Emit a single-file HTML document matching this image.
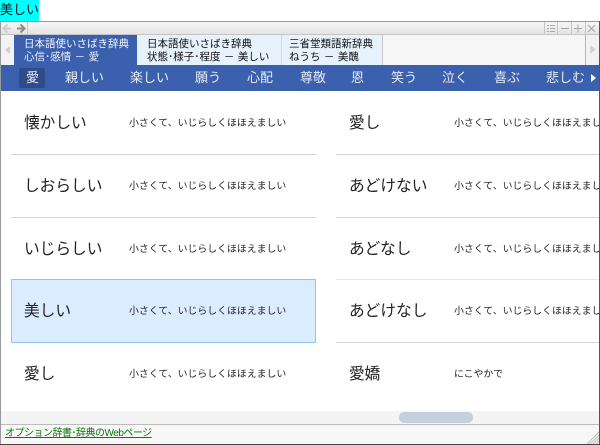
<!DOCTYPE html>
<html lang="ja"><head><meta charset="utf-8">
<style>
html,body{margin:0;padding:0;background:#fff}
body{width:600px;height:445px;position:relative;overflow:hidden;font-family:"Liberation Sans","Noto Sans CJK JP",sans-serif;color:#111}
.a{position:absolute;white-space:nowrap}
.t{line-height:14px;font-size:10.5px;word-spacing:.5px}
.n{top:69px;line-height:18px;font-size:13px;color:#e6ecf7}
.h{left:24px;font-size:15.7px;line-height:20px;color:#222}
.d{font-size:9.9px;line-height:14px;color:#222}
.l{height:1px;background:#d3d3e0}
</style></head><body>
<div class="a" style="left:0;top:0;width:39px;height:21px;background:#0ff"></div>
<div class="a" style="left:0;top:1px;font-size:13px;line-height:18px;color:#111">美しい</div>

<!-- window frame -->
<div class="a" style="left:0;top:21px;width:600px;height:1px;background:#9a9a9a"></div>
<div class="a" style="left:0;top:21px;width:1px;height:424px;background:#9a9a9a"></div>
<div class="a" style="left:599px;top:21px;width:1px;height:424px;background:#555"></div>
<div class="a" style="left:0;top:444px;width:600px;height:1px;background:#444"></div>

<!-- title bar -->
<div class="a" style="left:1px;top:22px;width:598px;height:12px;background:linear-gradient(#f7f7f7,#e4e4e4)"></div>
<div class="a" style="left:1px;top:34px;width:598px;height:1px;background:#c4c4c4"></div>
<div class="a" style="left:27px;top:22px;width:1px;height:12px;background:#c8c8c8"></div>
<svg class="a" style="left:1px;top:22px" width="27" height="13" viewBox="0 0 27 13" fill="none" stroke-width="2">
<path d="M10 6.5H3M6.5 2.5L2.5 6.5L6.5 10.5" stroke="#cfcfcf"/>
<path d="M16 6.5H23M19.5 2.5L23.5 6.5L19.5 10.5" stroke="#8a8a8a"/></svg>
<div class="a" style="left:544px;top:22px;width:1px;height:13px;background:#c4c4c4"></div>
<div class="a" style="left:557px;top:22px;width:1px;height:13px;background:#c4c4c4"></div>
<div class="a" style="left:571px;top:22px;width:1px;height:13px;background:#c4c4c4"></div>
<div class="a" style="left:585px;top:22px;width:1px;height:13px;background:#c4c4c4"></div>
<svg class="a" style="left:545px;top:22px" width="54" height="13" viewBox="0 0 54 13" fill="none" stroke="#a8a8a8" stroke-width="1">
<path d="M2 3.5H4M5 3.5H10M2 6.5H4M5 6.5H10M2 9.5H4M5 9.5H10"/>
<path d="M16 6.5H24"/>
<path d="M29 6.5H37M33 2.5V10.5"/>
<path d="M43 3L50 10M50 3L43 10" stroke-width="1.2"/></svg>

<!-- tab strip -->
<div class="a" style="left:1px;top:35px;width:13px;height:30px;background:#f2f2f2"></div>
<svg class="a" style="left:4px;top:46px" width="8" height="9"><path d="M6 0V8L1 4Z" fill="#cfcfcf"/></svg>
<div class="a" style="left:14px;top:35px;width:123px;height:30px;background:#3b60ad"></div>
<div class="a" style="left:137px;top:35px;width:145px;height:30px;background:#e8f2fc"></div>
<div class="a" style="left:281px;top:35px;width:1px;height:30px;background:#cfd8e4"></div>
<div class="a" style="left:282px;top:35px;width:100px;height:30px;background:#e8f2fc"></div>
<div class="a" style="left:382px;top:35px;width:1px;height:30px;background:#c8c8c8"></div>
<div class="a" style="left:383px;top:35px;width:202px;height:30px;background:#f6f6f6"></div>
<div class="a" style="left:585px;top:35px;width:1px;height:30px;background:#b4b4b4"></div>
<div class="a" style="left:586px;top:35px;width:13px;height:30px;background:#f2f2f2"></div>
<svg class="a" style="left:589px;top:45px" width="8" height="10"><path d="M1 0V9L7 4.5Z" fill="#d4d4d4"/></svg>

<div class="a t" style="left:24px;top:37px;color:#f2f5fb">日本語使いさばき辞典</div>
<div class="a t" style="left:24px;top:50px;color:#e8edf7">心信･感情 － 愛</div>
<div class="a t" style="left:147px;top:37px">日本語使いさばき辞典</div>
<div class="a t" style="left:147px;top:50px">状態･様子･程度 － 美しい</div>
<div class="a t" style="left:289px;top:37px">三省堂類語新辞典</div>
<div class="a t" style="left:289px;top:50px">ねうち － 美醜</div>

<!-- nav -->
<div class="a" style="left:1px;top:65px;width:598px;height:26px;background:#3b60ad"></div>
<div class="a" style="left:19px;top:68px;width:26px;height:20px;background:#2f4b88;border-radius:2px"></div>
<div class="a n" style="left:26px">愛</div>
<div class="a n" style="left:65px">親しい</div>
<div class="a n" style="left:130px">楽しい</div>
<div class="a n" style="left:195px">願う</div>
<div class="a n" style="left:247px">心配</div>
<div class="a n" style="left:300px">尊敬</div>
<div class="a n" style="left:351px">恩</div>
<div class="a n" style="left:391px">笑う</div>
<div class="a n" style="left:442px">泣く</div>
<div class="a n" style="left:494px">喜ぶ</div>
<div class="a n" style="left:546px">悲しむ</div>
<svg class="a" style="left:590px;top:73px" width="7" height="10"><path d="M1 1V9L6 5Z" fill="#fff"/></svg>

<!-- left column -->
<div class="a" style="left:11px;top:279px;width:303px;height:62px;background:#dcecff;border:1px solid #8fc2f5"></div>
<div class="a l" style="left:11px;top:154px;width:305px"></div>
<div class="a l" style="left:11px;top:217px;width:305px"></div>
<div class="a h" style="top:114px">懐かしい</div>
<div class="a h" style="top:177px">しおらしい</div>
<div class="a h" style="top:240px">いじらしい</div>
<div class="a h" style="top:302px">美しい</div>
<div class="a h" style="top:365px">愛し</div>
<div class="a d" style="left:129px;top:117px">小さくて、いじらしくほほえましい</div>
<div class="a d" style="left:129px;top:180px">小さくて、いじらしくほほえましい</div>
<div class="a d" style="left:129px;top:243px">小さくて、いじらしくほほえましい</div>
<div class="a d" style="left:129px;top:305px">小さくて、いじらしくほほえましい</div>
<div class="a d" style="left:129px;top:368px">小さくて、いじらしくほほえましい</div>

<!-- right column -->
<div class="a" style="left:336px;top:95px;width:263px;height:316px;overflow:hidden">
<div class="a l" style="left:0;top:59px;width:263px"></div>
<div class="a l" style="left:0;top:122px;width:263px"></div>
<div class="a l" style="left:0;top:184px;width:263px;background:#e6e6ee"></div>
<div class="a l" style="left:0;top:247px;width:263px"></div>
<div class="a h" style="left:13px;top:19px">愛し</div>
<div class="a h" style="left:13px;top:82px">あどけない</div>
<div class="a h" style="left:13px;top:145px">あどなし</div>
<div class="a h" style="left:13px;top:207px">あどけなし</div>
<div class="a h" style="left:13px;top:270px">愛嬌</div>
<div class="a d" style="left:118px;top:22px">小さくて、いじらしくほほえましい</div>
<div class="a d" style="left:118px;top:85px">小さくて、いじらしくほほえましい</div>
<div class="a d" style="left:118px;top:148px">小さくて、いじらしくほほえましい</div>
<div class="a d" style="left:118px;top:210px">小さくて、いじらしくほほえましい</div>
<div class="a d" style="left:118px;top:273px">にこやかで</div>
</div>

<!-- scrollbar -->
<div class="a" style="left:1px;top:411px;width:598px;height:13px;background:#f4f4f4"></div>
<div class="a" style="left:399px;top:412px;width:74px;height:11px;background:#c6cfdc;border-radius:5px"></div>

<!-- footer -->
<div class="a" style="left:1px;top:424px;width:598px;height:1px;background:#bcbcbc"></div>
<div class="a" style="left:1px;top:425px;width:598px;height:19px;background:#f7f7f7"></div>
<div class="a" style="left:5px;top:427px;font-size:10px;letter-spacing:-.5px;line-height:14px;color:#0a7a0a;text-decoration:underline">オプション辞書･辞典のWebページ</div>
<svg class="a" style="left:586px;top:431px" width="13" height="13" stroke="#bdbdb0" stroke-width="1"><path d="M13 1L1 13M13 4L4 13M13 7L7 13M13 10L10 13"/></svg>
</body></html>
